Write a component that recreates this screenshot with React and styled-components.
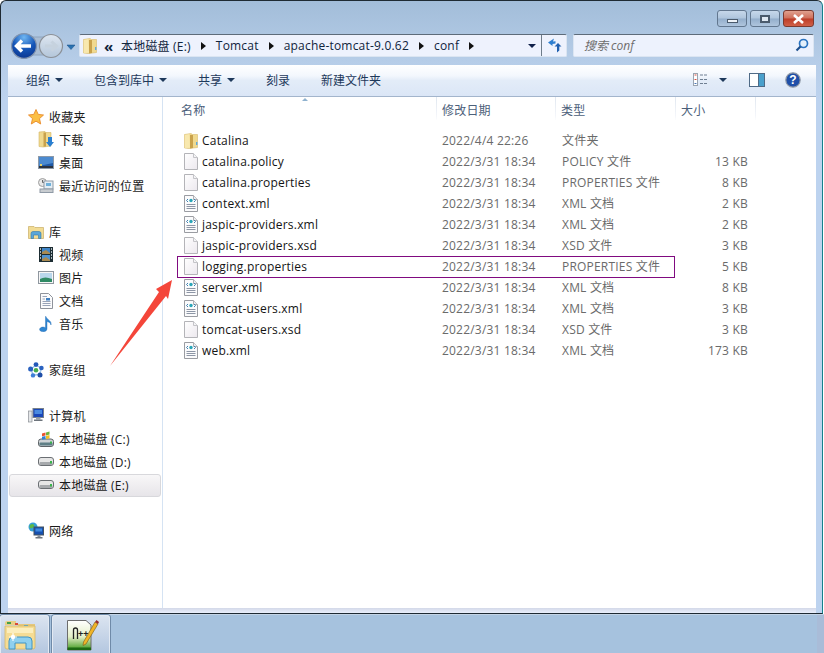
import styled, { createGlobalStyle } from "styled-components";

const GlobalStyle = createGlobalStyle`
  html, body {
    margin: 0;
    padding: 0;
    background: #fff;
  }
  * {
    box-sizing: border-box;
  }
`;

const FONT = `"Open Sans", "Noto Sans CJK SC", sans-serif`;

// ---------- icons ----------
const FolderIcon = () => (
  <svg width="14" height="16" viewBox="0 0 14 16">
    <path d="M0.5 1.5 L7 0.5 L8.5 1.5 L13.5 1.5 L13.5 14.5 L5 15.5 L0.5 15 Z" fill="#f0d98e" stroke="#d8bb6c" strokeWidth="0.6" />
    <path d="M0.8 2 L5.5 1 L6 14.8 L0.8 15 Z" fill="#f8e8ae" />
    <path d="M6 2 L9 2 L9 15 L6 15.4 Z" fill="#c9a24c" />
    <rect x="12" y="9" width="1.4" height="3" fill="#5fa8dc" />
  </svg>
);

const PageIcon = () => (
  <svg width="14" height="17" viewBox="0 0 14 17">
    <defs>
      <linearGradient id="pageFill" x1="0" y1="0" x2="1" y2="1">
        <stop offset="0" stopColor="#ffffff" />
        <stop offset="1" stopColor="#ece8ee" />
      </linearGradient>
    </defs>
    <path d="M0.5 0.5 L9.5 0.5 L13.5 4.5 L13.5 16.5 L0.5 16.5 Z" fill="url(#pageFill)" stroke="#b4b4b8" />
    <path d="M9.5 0.5 L9.5 4.5 L13.5 4.5" fill="#f4f4f6" stroke="#c4c4c8" />
  </svg>
);

const XmlIcon = () => (
  <svg width="14" height="17" viewBox="0 0 14 17">
    <path d="M0.5 0.5 L9.5 0.5 L13.5 4.5 L13.5 16.5 L0.5 16.5 Z" fill="#fbfbfc" stroke="#9a9ca2" />
    <path d="M9.5 0.5 L9.5 4.5 L13.5 4.5" fill="#eeeeef" stroke="#b0b0b4" />
    <path d="M4 4 L2.5 5.5 L4 7 M10 4 L11.5 5.5 L10 7" fill="none" stroke="#3f7fb0" strokeWidth="1" />
    <circle cx="7" cy="5.5" r="1.7" fill="#2aa6b8" />
    <path d="M2.5 9.5 H11.5 M2.5 11.5 H11.5 M2.5 13.5 H11.5" stroke="#8d96a6" strokeWidth="1" />
  </svg>
);

const StarIcon = () => (
  <svg width="16" height="16" viewBox="0 0 16 16">
    <path d="M8 0.5 L10.2 5.4 L15.5 6 L11.5 9.6 L12.7 15 L8 12.2 L3.3 15 L4.5 9.6 L0.5 6 L5.8 5.4 Z" fill="#fbbf45" stroke="#e98a2a" strokeWidth="0.9" />
  </svg>
);

const DownloadsIcon = () => (
  <svg width="16" height="17" viewBox="0 0 16 17">
    <path d="M1 1 L7 0.5 L8 1.5 L13 1.5 L13 15 L5 16 L1 15.5 Z" fill="#f0d98e" stroke="#d3b566" strokeWidth="0.6" />
    <path d="M5.5 1.5 L8 1.5 L8 15.5 L5.5 15.8 Z" fill="#c9a24c" />
    <path d="M10 6 H14 V11 H16 L12 16 L8 11 H10 Z" fill="#2a7fd0" />
  </svg>
);

const DesktopIcon = () => (
  <svg width="16" height="13" viewBox="0 0 16 13">
    <rect x="0.5" y="0.5" width="15" height="12" fill="#1f5aa8" stroke="#8c99a8" />
    <path d="M1 1 H15 V7 L1 10 Z" fill="#4b8ad0" />
    <rect x="1" y="10" width="14" height="2" fill="#2b3340" />
    <rect x="2" y="8" width="2" height="2" fill="#e8d46a" />
  </svg>
);

const RecentIcon = () => (
  <svg width="16" height="15" viewBox="0 0 16 15">
    <circle cx="4.5" cy="4.5" r="4" fill="#e8e8e8" stroke="#9c9c9c" />
    <path d="M4.5 2 V4.5 H7" fill="none" stroke="#666" />
    <rect x="6" y="3" width="9" height="8" fill="#e4edf4" stroke="#8f9aa6" />
    <rect x="8" y="5" width="5" height="3" fill="#6fb0da" />
    <rect x="2" y="11" width="13" height="3.5" fill="#c8ccd0" stroke="#8f9aa6" />
  </svg>
);

const LibraryIcon = () => (
  <svg width="16" height="14" viewBox="0 0 16 14">
    <path d="M0.5 1.5 H6 L7 2.5 H15.5 V13.5 H0.5 Z" fill="#f2dc94" stroke="#c8ae66" strokeWidth="0.7" />
    <path d="M3 13.5 V8.5 Q3 6.5 5 6.5 H11 Q13 6.5 13 8.5 V13.5 H10.5 V10 H5.5 V13.5 Z" fill="#5aa6d8" stroke="#2f79ad" strokeWidth="0.6" />
  </svg>
);

const VideoIcon = () => (
  <svg width="14" height="15" viewBox="0 0 14 15">
    <rect width="14" height="15" fill="#1d2d33" />
    <rect x="3" y="1" width="8" height="6" fill="#3f86c9" />
    <rect x="3" y="8" width="8" height="6" fill="#4f92cf" />
    <path d="M3 5 L7 3 L11 6 V7 H3 Z M3 12 L7 10 L11 13 V14 H3 Z" fill="#a88a52" />
    <path d="M1 2 H2 M1 5 H2 M1 8 H2 M1 11 H2 M12 2 H13 M12 5 H13 M12 8 H13 M12 11 H13" stroke="#d8e4ea" strokeWidth="1.4" />
  </svg>
);

const PictureIcon = () => (
  <svg width="16" height="13" viewBox="0 0 16 13">
    <rect x="0.5" y="0.5" width="15" height="12" fill="#f6f6f6" stroke="#8f979f" />
    <rect x="2" y="2" width="12" height="9" fill="#b9d7ec" />
    <path d="M2 8 Q7 5 14 8 V11 H2 Z" fill="#2f8a64" />
  </svg>
);

const DocIcon = () => (
  <svg width="13" height="16" viewBox="0 0 13 16">
    <path d="M0.5 0.5 H8.5 L12.5 4.5 V15.5 H0.5 Z" fill="#fbfbfc" stroke="#8f939b" />
    <path d="M2.5 3.5 H7 M2.5 6 H5 M2.5 8.5 H10.5 M2.5 10.5 H10.5 M2.5 12.5 H10.5" stroke="#8f9ab0" strokeWidth="0.9" />
    <rect x="6" y="5" width="4" height="2.5" fill="#3f7fc0" />
  </svg>
);

const MusicIcon = () => (
  <svg width="14" height="16" viewBox="0 0 14 16">
    <path d="M7 0.5 C8 4 13 4.5 12 9 C11.5 6.5 9.5 6 8 5.5 L8 13 C8 15 5.5 16 3 15.5 C0 15 0 12.5 2 11.5 C3.5 10.8 5.5 11 6.5 11.8 L6.5 0.5 Z" fill="#2f86d2" stroke="#1f68b0" strokeWidth="0.4" />
  </svg>
);

const HomegroupIcon = () => (
  <svg width="16" height="16" viewBox="0 0 16 16">
    <path d="M8 3 L13 6 L12 12.5 L5 13 L3 7 Z" fill="none" stroke="#9cc4e8" strokeWidth="1.4" />
    <circle cx="8" cy="8.2" r="2.3" fill="#44ad4e" />
    <circle cx="8" cy="2.6" r="2.4" fill="#2458b8" />
    <circle cx="13.4" cy="6" r="2.3" fill="#2a62c0" />
    <circle cx="12" cy="12.9" r="2.5" fill="#1f4fa8" />
    <circle cx="5" cy="13.4" r="2.2" fill="#3f7fd8" />
    <circle cx="2.6" cy="7" r="2.5" fill="#2a62c0" />
  </svg>
);

const ComputerIcon = () => (
  <svg width="16" height="15" viewBox="0 0 16 15">
    <rect x="0.5" y="3" width="3.5" height="11" fill="#e4e6e8" stroke="#8a8f94" strokeWidth="0.7" />
    <rect x="5" y="0.5" width="10.5" height="9" fill="#1a47b8" stroke="#76808c" />
    <rect x="6.5" y="2" width="7.5" height="4" fill="#4a8ae0" />
    <rect x="8" y="9.5" width="4.5" height="2" fill="#9aa2aa" />
    <rect x="6" y="11.5" width="8.5" height="1.5" fill="#6d747c" />
  </svg>
);

const DriveIcon = () => (
  <svg width="16" height="9" viewBox="0 0 16 9">
    <rect x="0.5" y="0.5" width="15" height="8" rx="2.5" fill="#e6e6e6" stroke="#6b6f73" />
    <rect x="1.5" y="5" width="13" height="3" rx="1" fill="#a6a9ac" />
    <rect x="12" y="4" width="2" height="2.5" fill="#39b54a" />
  </svg>
);

const SystemDriveIcon = () => (
  <svg width="16" height="16" viewBox="0 0 16 16">
    <rect x="0.5" y="8" width="15" height="7.5" rx="2.5" fill="#cfd3d6" stroke="#5f6468" />
    <rect x="1.5" y="11.5" width="13" height="3" rx="1" fill="#5f7f86" />
    <rect x="12" y="10.5" width="2" height="2" fill="#39b54a" />
    <path d="M4 2.5 L7.5 1.5 V4.5 L4 5.2 Z" fill="#e8522e" />
    <path d="M8 1.4 L11.5 0.5 V3.6 L8 4.4 Z" fill="#6cb33f" />
    <path d="M4 5.7 L7.5 5 V8 L4 8.7 Z" fill="#2e7fd6" />
    <path d="M8 4.9 L11.5 4.1 V7.2 L8 8 Z" fill="#f4c020" />
  </svg>
);

const NetworkIcon = () => (
  <svg width="16" height="17" viewBox="0 0 16 17">
    <circle cx="5" cy="5" r="4.5" fill="#33a0d8" />
    <path d="M2 3 Q5 1 6 3 Q7 5 4 6 Q2 7 1.5 5 Z" fill="#5cb848" />
    <rect x="6" y="5" width="9.5" height="8" fill="#1550b0" stroke="#46525e" />
    <rect x="7.5" y="6.5" width="6.5" height="3" fill="#3f8ae0" />
    <rect x="9.5" y="13" width="3" height="2" fill="#8a929a" />
    <rect x="7.5" y="15" width="7" height="1.5" fill="#6d747c" />
  </svg>
);

const NavCluster = () => (
  <svg width="71" height="26" viewBox="0 0 71 26">
    <defs>
      <radialGradient id="backFill" cx="0.5" cy="0.15" r="0.95">
        <stop offset="0" stopColor="#6fb6f2" />
        <stop offset="0.5" stopColor="#1556b8" />
        <stop offset="1" stopColor="#0a2f86" />
      </radialGradient>
      <linearGradient id="forwardFill" x1="0" y1="0" x2="0" y2="1">
        <stop offset="0" stopColor="#dde6f0" />
        <stop offset="1" stopColor="#b4c6da" />
      </linearGradient>
    </defs>
    <rect x="12" y="4" width="40" height="18" rx="9" fill="#a9bdd4" stroke="#8ea4bd" />
    <circle cx="43" cy="13" r="11.5" fill="url(#forwardFill)" stroke="#8b9097" strokeWidth="1.2" />
    <path d="M37 13 H48 M43.5 8.5 L48.5 13 L43.5 17.5" fill="none" stroke="#c6d2de" strokeWidth="3" />
    <circle cx="16" cy="13" r="12.4" fill="url(#backFill)" stroke="#8193ad" strokeWidth="1.2" />
    <path d="M9 13 H23 M14 7.5 L8.5 13 L14 18.5" fill="none" stroke="#fff" strokeWidth="3.4" />
    <path d="M59 12 H67 L63 16.5 Z" fill="#2a72b0" stroke="#164f86" strokeWidth="0.5" />
  </svg>
);

const RefreshIcon = () => (
  <svg width="15" height="15" viewBox="0 0 15 15">
    <path d="M7 0.5 L1 4.5 L5.5 8 L5.5 6 L8.5 5.5 L8.5 3.2 L6 3.5 Z" fill="#2f7fd0" />
    <path d="M10 14.5 L10 8.5 L7.5 8.5 L11 5 L14.5 8.5 L12.3 8.5 L12.3 12.5 Z" fill="#1f5fb0" />
  </svg>
);

const SearchIcon = () => (
  <svg width="14" height="14" viewBox="0 0 14 14">
    <circle cx="8.5" cy="5.5" r="4" fill="#e4f0fb" stroke="#2a73c0" strokeWidth="1.7" />
    <path d="M5.5 8.5 L1.5 12.5" stroke="#1d4f8e" strokeWidth="2.2" />
  </svg>
);

const ViewIcon = () => (
  <svg width="16" height="13" viewBox="0 0 16 13">
    <rect x="0.5" y="0.5" width="4" height="12" fill="#fff" stroke="#9aa4b0" />
    <path d="M1.5 2 H3.5 M1.5 6.5 H3.5" stroke="#d85040" />
    <path d="M1.5 10.5 H3.5" stroke="#4a78b8" />
    <path d="M7 2 H15 M7 6.5 H15 M7 10.5 H15" stroke="#6f7f92" strokeDasharray="3 1" />
  </svg>
);

const PaneIcon = () => (
  <svg width="16" height="14" viewBox="0 0 16 14">
    <rect x="0.5" y="0.5" width="15" height="13" fill="#fff" stroke="#4f6a86" />
    <rect x="10" y="1" width="5" height="12" fill="#4aa0cc" />
    <path d="M9.5 1 V13" stroke="#4f6a86" />
  </svg>
);

const HelpIcon = () => (
  <svg width="16" height="16" viewBox="0 0 16 16">
    <circle cx="8" cy="8" r="7.2" fill="#1f4fa8" stroke="#8f98a6" strokeWidth="1.2" />
    <text x="8" y="12.2" textAnchor="middle" fontSize="12" fontWeight="700" fontFamily="Liberation Sans, sans-serif" fill="#fff">?</text>
  </svg>
);

const ExplorerIcon = () => (
  <svg width="32" height="30" viewBox="0 0 32 30">
    <path d="M1 3 Q1 1 3 1 H12 V5 H1 Z" fill="#e9cf85" />
    <rect x="3" y="2" width="4" height="2" fill="#43a047" />
    <rect x="11" y="3" width="3" height="2" fill="#d84a3a" />
    <path d="M14 4 H31 V10 H14 Z" fill="#e4c77c" />
    <rect x="20" y="5" width="4" height="2" fill="#2f9fe0" />
    <path d="M1 6 H31 V27 Q31 29 29 29 H3 Q1 29 1 27 Z" fill="#f5dc94" stroke="#d5b767" strokeWidth="0.8" />
    <path d="M3 8 H29 V13 H3 Z" fill="#fbeebd" />
    <path d="M5 29 V21 Q5 17 9 17 H24 Q28 17 28 21 V29 H22 V23 H11 V29 Z" fill="#8fd0ee" stroke="#3f94c4" />
    <path d="M9 13 V21 M5 17 H13" stroke="#fff" strokeWidth="1.2" opacity="0.9" />
    <circle cx="9" cy="17" r="2.2" fill="#fff" />
  </svg>
);

const NotepadIcon = () => (
  <svg width="32" height="32" viewBox="0 0 32 32">
    <defs>
      <linearGradient id="nppFill" x1="0" y1="0" x2="0" y2="1">
        <stop offset="0" stopColor="#ffffff" />
        <stop offset="0.55" stopColor="#e4efc8" />
        <stop offset="1" stopColor="#3f9a1e" />
      </linearGradient>
    </defs>
    <path d="M0.5 1.5 H19 L24 6 V31 H0.5 Z" fill="url(#nppFill)" stroke="#6c6c6c" />
    <rect x="0.5" y="28.5" width="23.5" height="2.5" fill="#1d6a12" />
    <path d="M6.5 20 V11 Q6.5 9 8.5 9 Q10.5 9 10.5 11 V20" fill="none" stroke="#222" strokeWidth="1.3" />
    <text x="11" y="18" fontSize="9" fontWeight="700" fontFamily="Liberation Sans, sans-serif" fill="#222">++</text>
    <path d="M28 3 L31 5 L19 25 L16 26.5 L16.5 23 Z" fill="#f0b428" stroke="#7a5a12" strokeWidth="0.6" />
    <path d="M28 3 L29.5 1 L32 3 L31 5 Z" fill="#9a2e2e" />
  </svg>
);

// ---------- data ----------
const NAV = [
  {
    head: [StarIcon, "收藏夹"],
    items: [
      [DownloadsIcon, "下载"],
      [DesktopIcon, "桌面"],
      [RecentIcon, "最近访问的位置"],
    ],
  },
  {
    head: [LibraryIcon, "库"],
    items: [
      [VideoIcon, "视频"],
      [PictureIcon, "图片"],
      [DocIcon, "文档"],
      [MusicIcon, "音乐"],
    ],
  },
  { head: [HomegroupIcon, "家庭组"], items: [] },
  {
    head: [ComputerIcon, "计算机"],
    items: [
      [SystemDriveIcon, "本地磁盘 (C:)"],
      [DriveIcon, "本地磁盘 (D:)"],
      [DriveIcon, "本地磁盘 (E:)", true],
    ],
  },
  { head: [NetworkIcon, "网络"], items: [] },
];

const FILES = [
  [FolderIcon, "Catalina", "2022/4/4 22:26", "文件夹", ""],
  [PageIcon, "catalina.policy", "2022/3/31 18:34", "POLICY 文件", "13 KB"],
  [PageIcon, "catalina.properties", "2022/3/31 18:34", "PROPERTIES 文件", "8 KB"],
  [XmlIcon, "context.xml", "2022/3/31 18:34", "XML 文档", "2 KB"],
  [XmlIcon, "jaspic-providers.xml", "2022/3/31 18:34", "XML 文档", "2 KB"],
  [PageIcon, "jaspic-providers.xsd", "2022/3/31 18:34", "XSD 文件", "3 KB"],
  [PageIcon, "logging.properties", "2022/3/31 18:34", "PROPERTIES 文件", "5 KB"],
  [XmlIcon, "server.xml", "2022/3/31 18:34", "XML 文档", "8 KB"],
  [XmlIcon, "tomcat-users.xml", "2022/3/31 18:34", "XML 文档", "3 KB"],
  [PageIcon, "tomcat-users.xsd", "2022/3/31 18:34", "XSD 文件", "3 KB"],
  [XmlIcon, "web.xml", "2022/3/31 18:34", "XML 文档", "173 KB"],
];

const CRUMBS = ["本地磁盘 (E:)", "Tomcat", "apache-tomcat-9.0.62", "conf"];

const TOOLS = [
  ["组织", true],
  ["包含到库中", true],
  ["共享", true],
  ["刻录", false],
  ["新建文件夹", false],
];

const App = () => {
  return (
    <Desktop>
      <GlobalStyle />
      <Window>
        <TitleBar>
          <CaptionButton>
            <MinGlyph />
          </CaptionButton>
          <CaptionButton>
            <MaxGlyph />
          </CaptionButton>
          <CloseButton>
            <svg width="13" height="10" viewBox="0 0 13 10">
              <path d="M2 1 L11 9 M11 1 L2 9" stroke="#fff" strokeWidth="2.6" />
            </svg>
          </CloseButton>
        </TitleBar>

        <AddressRow>
          <NavCluster />
          <AddressBox>
            <FolderSlot>
              <FolderIcon />
            </FolderSlot>
            <Chevrons>«</Chevrons>
            {CRUMBS.map((crumb) => (
              <Crumb key={crumb}>
                {crumb}
                <CrumbArrow />
              </Crumb>
            ))}
            <DropArrow />
            <RefreshSlot>
              <RefreshIcon />
            </RefreshSlot>
          </AddressBox>
          <SearchBox>
            <SearchText>搜索 conf</SearchText>
            <SearchIcon />
          </SearchBox>
        </AddressRow>

        <Toolbar>
          {TOOLS.map(([label, hasMenu]) => (
            <ToolItem key={label}>
              {label}
              {hasMenu && <ToolCaret />}
            </ToolItem>
          ))}
          <ToolRight>
            <ViewIcon />
            <ToolCaret $gap={10} />
            <PaneSlot>
              <PaneIcon />
            </PaneSlot>
            <HelpIcon />
          </ToolRight>
        </Toolbar>

        <Body>
          <NavPane>
            {NAV.map((group) => {
              const [HeadIcon, headLabel] = group.head;
              return (
                <NavGroup key={headLabel}>
                  <NavRow>
                    <HeadSlot>
                      <HeadIcon />
                    </HeadSlot>
                    {headLabel}
                  </NavRow>
                  {group.items.map(([ItemIcon, label, active]) => (
                    <NavRow key={label} $active={active}>
                      <ItemSlot>
                        <ItemIcon />
                      </ItemSlot>
                      {label}
                    </NavRow>
                  ))}
                </NavGroup>
              );
            })}
          </NavPane>

          <Main>
            <HeaderRow>
              <HeaderCell $first>
                名称
                <SortArrow />
              </HeaderCell>
              <HeaderCell>修改日期</HeaderCell>
              <HeaderCell>类型</HeaderCell>
              <HeaderCell>大小</HeaderCell>
            </HeaderRow>
            <FileList>
              {FILES.map(([Icon, name, date, type, size]) => (
                <FileRow key={name}>
                  <NameCell>
                    <Icon />
                    {name}
                  </NameCell>
                  <MetaCell>{date}</MetaCell>
                  <MetaCell>{type}</MetaCell>
                  <SizeCell>{size}</SizeCell>
                </FileRow>
              ))}
            </FileList>
          </Main>
        </Body>
        <BottomStrip />
      </Window>

      <Taskbar>
        <TaskButton $width={49}>
          <ExplorerIcon />
        </TaskButton>
        <TaskButton $width={58} $pad={14}>
          <NotepadIcon />
        </TaskButton>
        <ShowDesktop />
      </Taskbar>

      {/* annotations drawn over the screenshot */}
      <HighlightBox />
      <ArrowMark width="70" height="92" viewBox="0 0 70 92">
        <path d="M1 88 L50 14 L47 11 L63 2 L59 21 L57 18 Z" fill="#f4463a" />
      </ArrowMark>
    </Desktop>
  );
};

const Desktop = styled.div`
  position: relative;
  display: flex;
  flex-direction: column;
  width: 824px;
  height: 653px;
  overflow: hidden;
  font-family: ${FONT};
  font-size: 12px;
  color: #1a1a1a;
`;

const Window = styled.div`
  display: flex;
  flex-direction: column;
  width: 823px;
  height: 614px;
  padding: 0 6px 0 7px;
  border: 1px solid #1e2a33;
  border-right-color: #16808c;
  border-radius: 6px 6px 0 0;
  background: linear-gradient(#a2bdd9 0, #b6cde8 60px, #bdd3ef 100px);
`;

const TitleBar = styled.div`
  display: flex;
  justify-content: flex-end;
  gap: 3px;
  height: 32px;
  padding: 9px 2px 0 0;
`;

const CaptionButton = styled.div`
  display: flex;
  align-items: center;
  justify-content: center;
  width: 30px;
  height: 17px;
  border: 1px solid #62778f;
  border-radius: 3px;
  background: linear-gradient(#c6d7ea 0, #afc5dd 48%, #93aecb 52%, #afc5dd 100%);
`;

const CloseButton = styled(CaptionButton)`
  width: 31px;
  border-color: #7a3a30;
  background: linear-gradient(#e0a08e 0, #cf6f5b 48%, #bd3d28 52%, #cf6048 100%);
`;

const MinGlyph = styled.span`
  width: 11px;
  height: 4px;
  margin-top: 4px;
  border: 1px solid #4a5a6c;
  background: #eef3f8;
`;

const MaxGlyph = styled.span`
  width: 10px;
  height: 8px;
  border: 2px solid #4a5a6c;
  background: #dfe8f2;
`;

const AddressRow = styled.div`
  display: flex;
  align-items: flex-start;
  gap: 0;
  height: 26px;
  padding-right: 2px;
`;

const AddressBox = styled.div`
  display: flex;
  align-items: center;
  width: 488px;
  height: 23px;
  margin: 1px 6px 0 0;
  border: 1px solid #dbe5f2;
  border-top-color: #5d6b7a;
  border-radius: 2px;
  background: #eef2fd;
  color: #10243c;
  letter-spacing: 0.2px;
`;

const FolderSlot = styled.span`
  display: flex;
  margin: 0 7px 0 3px;
`;

const Chevrons = styled.span`
  width: 17px;
  font-size: 15px;
  font-weight: 700;
  line-height: 14px;
`;

const Crumb = styled.span`
  display: flex;
  align-items: center;
  gap: 10px;
  margin-right: 10px;
  white-space: nowrap;
`;

const CrumbArrow = styled.i`
  width: 0;
  height: 0;
  border: 4px solid transparent;
  border-left: 5px solid #111;
  border-right: 0;
`;

const DropArrow = styled.i`
  width: 0;
  height: 0;
  margin-left: auto;
  margin-right: 5px;
  border: 4px solid transparent;
  border-top: 4px solid #10204a;
  border-bottom: 0;
`;

const RefreshSlot = styled.span`
  display: flex;
  align-items: center;
  justify-content: center;
  width: 25px;
  height: 100%;
  border-left: 1px solid #6e7c8a;
`;

const SearchBox = styled.div`
  display: flex;
  align-items: center;
  justify-content: space-between;
  flex: 1;
  height: 23px;
  margin-top: 1px;
  padding: 0 4px 2px 10px;
  border: 1px solid #dbe5f2;
  border-top-color: #5d6b7a;
  border-radius: 2px;
  background: #edf2fd;
`;

const SearchText = styled.span`
  font-style: italic;
  color: #6d6d6d;
`;

const Toolbar = styled.div`
  display: flex;
  align-items: center;
  gap: 31px;
  height: 32px;
  margin-top: 6px;
  padding: 0 0 2px 18px;
  border-bottom: 1px solid #a3b5cc;
  background: linear-gradient(#ffffff 0, #f3f7fd 35%, #e3ecf8 50%, #dbe6f6 100%);
  color: #1e395b;
`;

const ToolItem = styled.span`
  display: flex;
  align-items: center;
  gap: 5px;
  white-space: nowrap;
`;

const ToolCaret = styled.i`
  width: 0;
  height: 0;
  margin-left: ${(props) => props.$gap || 0}px;
  border: 4px solid transparent;
  border-top: 4px solid #1e395b;
  border-bottom: 0;
`;

const ToolRight = styled.div`
  display: flex;
  align-items: center;
  margin-left: auto;
  padding-right: 15px;
`;

const PaneSlot = styled.span`
  display: flex;
  margin: 0 20px 0 22px;
`;

const Body = styled.div`
  display: flex;
  flex: 1;
  min-height: 0;
  background: #fff;
  letter-spacing: 0.2px;
`;

const NavPane = styled.nav`
  display: flex;
  flex-direction: column;
  gap: 23px;
  width: 155px;
  padding: 9px 1px 0;
  border-right: 1px solid #d5e3f3;
`;

const NavGroup = styled.div`
  display: flex;
  flex-direction: column;
`;

const NavRow = styled.div`
  display: flex;
  align-items: center;
  height: 23px;
  padding-bottom: 2px;
  border: 1px solid ${(props) => (props.$active ? "#d8d8dc" : "transparent")};
  border-radius: 3px;
  background: ${(props) => (props.$active ? "linear-gradient(#f8f7f8, #e7e5e9)" : "none")};
  white-space: nowrap;
`;

const HeadSlot = styled.span`
  display: flex;
  justify-content: center;
  width: 16px;
  margin: 0 5px 0 18px;
`;

const ItemSlot = styled.span`
  display: flex;
  justify-content: center;
  width: 16px;
  margin: 0 5px 0 28px;
`;

const Main = styled.main`
  flex: 1;
  min-width: 0;
`;

const HeaderRow = styled.div`
  display: grid;
  grid-template-columns: 274px 119px 120px 80px;
  height: 23px;
  color: #4c607a;
`;

const HeaderCell = styled.div`
  position: relative;
  display: flex;
  align-items: center;
  padding-top: 2px;
  padding-left: ${(props) => (props.$first ? 18 : 5)}px;
  border-right: 1px solid;
  border-image: linear-gradient(#dfe6ef, #f4f6fa 80%, #fff) 1;
`;

const SortArrow = styled.i`
  position: absolute;
  top: 1px;
  left: 139px;
  width: 0;
  height: 0;
  border: 3px solid transparent;
  border-bottom: 3px solid #8fb2cf;
  border-top: 0;
`;

const FileList = styled.div`
  padding-top: 10px;
`;

const FileRow = styled.div`
  display: grid;
  grid-template-columns: 279px 120px 112px 74px;
  align-items: center;
  height: 21px;
  line-height: 16px;
  white-space: nowrap;
`;

const NameCell = styled.div`
  display: flex;
  align-items: center;
  gap: 4px;
  padding-left: 21px;
  color: #141414;
`;

const MetaCell = styled.div`
  color: #6a6a6a;
`;

const SizeCell = styled(MetaCell)`
  text-align: right;
`;

const BottomStrip = styled.div`
  height: 5px;
  background: linear-gradient(#d3d8e8, #e9effc);
`;

const Taskbar = styled.div`
  display: flex;
  flex: 1;
  gap: 3px;
  border-top: 1px solid #c4d4e6;
  background: #a6c2de;
`;

const TaskButton = styled.div`
  display: flex;
  align-items: center;
  width: ${(props) => props.$width}px;
  padding-left: ${(props) => props.$pad || 3}px;
  border: 1px solid #e3eaf3;
  border-bottom: 0;
  border-radius: 3px 3px 0 0;
  box-shadow: 0 0 0 1px #6f8aa8;
  background: linear-gradient(#dbe4f0, #b4c7e0);
`;

const ShowDesktop = styled.div`
  width: 7px;
  margin-left: auto;
  background: #a9bcd8;
`;

const HighlightBox = styled.div`
  position: absolute;
  top: 256px;
  left: 177px;
  width: 498px;
  height: 22px;
  border: 1px solid #800a80;
`;

const ArrowMark = styled.svg`
  position: absolute;
  top: 278px;
  left: 109px;
`;

export default App;
